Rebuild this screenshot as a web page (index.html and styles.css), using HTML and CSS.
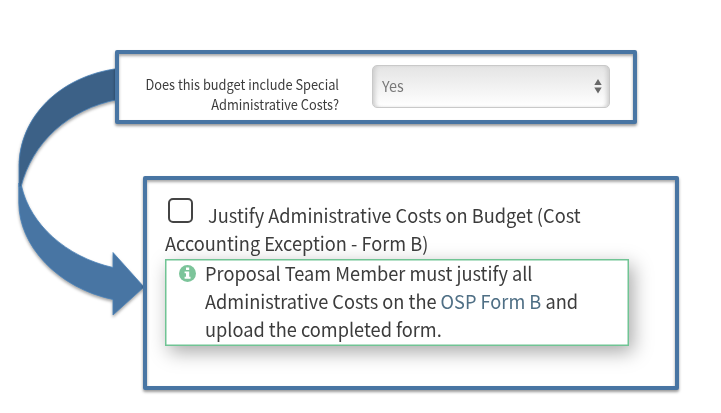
FILE: index.html
```html
<!DOCTYPE html>
<html lang="en">
<head>
<meta charset="utf-8">
<title>Special Administrative Costs</title>
<link rel="stylesheet" href="styles.css">
</head>
<body>
<main class="page">
  <svg class="arrow" width="160" height="270" viewBox="0 60 160 270" aria-hidden="true">
    <path class="arrow-bottom" d="M18.800 183V203C19 246 58 288 113 299.500V315L144 287L113 252.500V267.500C66 257 30 224 21.500 186Z"/>
    <path class="arrow-top" d="M118 68.500C60 76 19 117 19 167V187H21C32 143 68 109 118 99.500Z"/>
  </svg>
  <section class="panel question">
    <label class="question-label" for="special">Does this budget include Special<br>Administrative Costs?</label>
    <div class="select" id="special">
      <span>Yes</span>
      <svg width="8" height="15" viewBox="0 0 8 15"><path d="M4 0L7.700 6H.3ZM.3 8.500H7.700L4 14.500Z"/></svg>
    </div>
  </section>
  <section class="panel detail">
    <div class="check-row"><span class="checkbox"></span><span class="line first">Justify Administrative Costs on Budget (Cost</span></div>
    <div class="line second">Accounting Exception - Form B)</div>
    <div class="note">
      <svg class="info" width="17" height="17" viewBox="0 0 17 17"><circle cx="8.500" cy="8.500" r="8.500"/><path d="M7 2.500h3.200v2.600H7ZM5.600 6.500h4.600v5.300h1.300v2H5.600v-2h1.400V8.300H5.600Z"/></svg>
      <div class="note-text">
        <div class="line">Proposal Team Member must justify all</div>
        <div class="line">Administrative Costs on the <a>OSP Form B</a> and</div>
        <div class="line">upload the completed form.</div>
      </div>
    </div>
  </section>
</main>
</body>
</html>
```
FILE: styles.css
```css
* { box-sizing: border-box; }
body { margin: 0; background: #fff; color: #3c3c3c; font-family: "Noto Sans CJK SC", "Noto Sans", sans-serif; }
.page { position: relative; width: 721px; height: 413px; padding-top: 50px; overflow: hidden; }
.arrow { position: absolute; left: 0; top: 60px; filter: drop-shadow(0 2px 1.5px rgba(0,0,0,.35)); }
.arrow path { stroke: #4a83ba; stroke-width: .8; }
.arrow-top { fill: #3c6187; }
.arrow-bottom { fill: #4875a3; }
.panel { position: relative; border: 4px solid #4875a3; border-radius: 2px; box-shadow: 0 2px 3px rgba(0,0,0,.4), inset 0 2px 3px rgba(0,0,0,.35); background: #fff; }
.question { width: 522px; height: 74px; margin-left: 115px; display: flex; align-items: flex-start; padding-top: 11px; }
.question-label { width: 220px; margin-top: 9px; text-align: right; font-size: 14px; line-height: 20px; white-space: nowrap; transform: scaleX(.915); transform-origin: 100% 50%; }
.select { width: 238px; height: 43px; margin-left: 33px; border: 1px solid #c9c9c9; border-radius: 5px; background: linear-gradient(#e4e4e4, #fff); box-shadow: inset 4px 0 4px -2px #ccc, inset -4px 0 4px -2px #ccc; display: flex; align-items: center; justify-content: space-between; padding: 0 7px 0 9px; color: #777; font-size: 15px; }
.select span { margin-top: -2px; transform: scaleX(.96); transform-origin: 0 50%; }
.select svg { fill: #686868; }
.detail { width: 536px; height: 214px; margin: 52px 0 0 143px; padding: 18px 0 0 18px; }
.check-row { display: flex; height: 34px; }
.checkbox { width: 25px; height: 25px; margin: 0 15px 0 3px; border: 2px solid #444; border-radius: 5px; }
.line { width: max-content; height: 28px; font-size: 19px; line-height: 28px; white-space: nowrap; transform: scaleX(.958); transform-origin: 0 50%; }
.first { margin-top: 3px; }
.second { margin-top: -3px; }
.note { width: 464px; height: 87px; margin-top: 2px; border: 1px solid #70c494; background: #fff; box-shadow: 4px 6px 18px rgba(0,0,0,.34), inset 0 0 0 .5px #70c494; display: flex; padding-left: 13px; }
.note-text { margin-top: -1px; }
.info { margin: 5px 9px 0 0; fill: #7cc49a; }
.info path { fill: #fff; }
.note a { color: #4f6f85; }
```
